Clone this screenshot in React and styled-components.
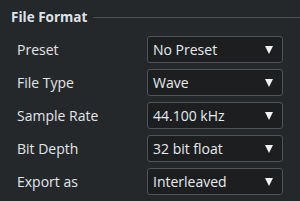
import styled, { createGlobalStyle } from "styled-components"

const Global = createGlobalStyle`
  html, body {
    margin: 0;
    padding: 0;
    background: #25282b;
    overflow: hidden;
  }
  body {
    font-family: "Open Sans", "Noto Sans", sans-serif;
  }
`;

const Panel = styled.div`
  width: 300px;
  height: 201px;
  background: #25282b;
  overflow: hidden;
`;

const Header = styled.div`
  display: flex;
  align-items: center;
  gap: 6px;
  height: 34px;
  padding-left: 11px;
`;

const Title = styled.span`
  font-size: 13.5px;
  font-weight: 700;
  color: #dde3ea;
  white-space: nowrap;
`;

const Rule = styled.div`
  flex: 1;
  height: 1px;
  background: #4b4f53;
`;

const Rows = styled.div`
  display: flex;
  flex-direction: column;
  gap: 6px;
  padding: 2px 0 0 17px;
`;

const Row = styled.div`
  display: flex;
  align-items: center;
  height: 27px;
`;

const Label = styled.span`
  width: 130px;
  font-size: 14px;
  color: #e1e6ea;
`;

const Select = styled.div`
  box-sizing: border-box;
  width: 136px;
  height: 27px;
  display: flex;
  align-items: center;
  justify-content: space-between;
  padding: 0 9px 0 5px;
  background: #1c1e20;
  border: 1px solid #505458;
  border-radius: 3px;
  font-size: 14px;
  color: #e6ebef;
`;

const Arrow = styled.span`
  width: 0;
  height: 0;
  border-left: 4.5px solid transparent;
  border-right: 4.5px solid transparent;
  border-top: 8px solid #f2f2f2;
`;

const fields = [
  ["Preset", "No Preset"],
  ["File Type", "Wave"],
  ["Sample Rate", "44.100 kHz"],
  ["Bit Depth", "32 bit float"],
  ["Export as", "Interleaved"],
];

export default function App() {
  return (
    <Panel>
      <Global />
      <Header>
        <Title>File Format</Title>
        <Rule />
      </Header>
      <Rows>
        {fields.map(([label, value]) => (
          <Row key={label}>
            <Label>{label}</Label>
            <Select>
              <span>{value}</span>
              <Arrow />
            </Select>
          </Row>
        ))}
        {/* next row, only its top edge shows in the window */}
        <Row>
          <Label />
          <Select />
        </Row>
      </Rows>
    </Panel>
  )
}
